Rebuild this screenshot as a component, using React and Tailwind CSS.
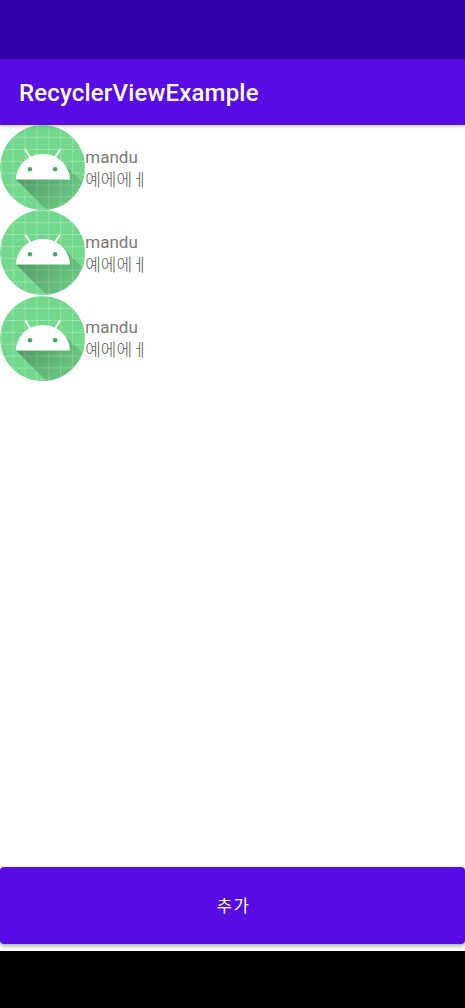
import React from "react";

const LINES = [1.3, 13.2, 25.1, 37, 48.8, 60.7, 72.6, 84.5];

function RobotIcon({ id }) {
  return (
    <svg viewBox="0 0 85.33 85.33" className="h-[85.33px] w-[85.33px] shrink-0">
      <defs>
        <clipPath id={`circle-${id}`}>
          <circle cx="42.6" cy="42.6" r="42.6" />
        </clipPath>
        <linearGradient id={`shade-${id}`} gradientUnits="userSpaceOnUse" x1="26" y1="46" x2="68" y2="84">
          <stop offset="0" stopColor="#000" stopOpacity="0.28" />
          <stop offset="1" stopColor="#000" stopOpacity="0.06" />
        </linearGradient>
      </defs>
      <g clipPath={`url(#circle-${id})`}>
        <rect width="86" height="86" fill="#71d88c" />
        {LINES.map((p) => (
          <path key={p} d={`M${p} 0V86M0 ${p - 0.6}H86`} stroke="#fff" strokeOpacity="0.28" strokeWidth="1" />
        ))}
        <path d="M16.2 54.6L67.5 42.5L98 73V100H61.6Z" fill={`url(#shade-${id})`} />
      </g>
      <path d="M25.4 24.7L30.6 33M59.9 24.7L54.7 33" stroke="#fff" strokeWidth="1.9" />
      <path d="M15.8 54.4C16.7 40 28 29 42.9 29S69.1 40 70 54.4Z" fill="#fff" />
      <circle cx="30" cy="44.3" r="2.3" fill="#45a968" />
      <circle cx="55.1" cy="44.3" r="2.3" fill="#45a968" />
    </svg>
  );
}

function Row({ id }) {
  return (
    <li className="flex h-[85.33px] items-center">
      <RobotIcon id={id} />
      <div className="font-['Roboto','Noto_Sans_CJK_KR',sans-serif] text-[17px] leading-[22px] text-[#7a7a7a]">
        <p>mandu</p>
        <p className="font-['Noto_Sans_CJK_KR',sans-serif] text-[16.9px] font-light text-[#585858]">예에에ㅔ</p>
      </div>
    </li>
  );
}

export default function App() {
  return (
    <div className="flex h-[1008px] w-[465px] flex-col overflow-hidden bg-white">
      <div className="h-[58.5px] shrink-0 bg-[#3000ab]" />
      <header className="z-10 flex h-[66.4px] shrink-0 items-center bg-[#590be3] pt-[3px] pl-[19px] shadow-[0_1px_4px_rgba(0,0,0,0.25)]">
        <h1 className="font-['Roboto',sans-serif] text-[24px] font-medium tracking-[0.18px] text-white">RecyclerViewExample</h1>
      </header>
      <ul className="flex-1">
        <Row id="a" />
        <Row id="b" />
        <Row id="c" />
      </ul>
      <div className="h-[84.5px] shrink-0">
        <button className="flex h-[77.5px] w-full items-center justify-center rounded-[4px] bg-[#590be3] pl-[2px] font-['Noto_Sans_CJK_KR',sans-serif] text-[16.6px] tracking-[1.4px] text-white shadow-[0_2px_4px_rgba(0,0,0,0.35)]">
          추가
        </button>
      </div>
      <div className="z-10 h-[57px] shrink-0 bg-black" />
    </div>
  );
}
